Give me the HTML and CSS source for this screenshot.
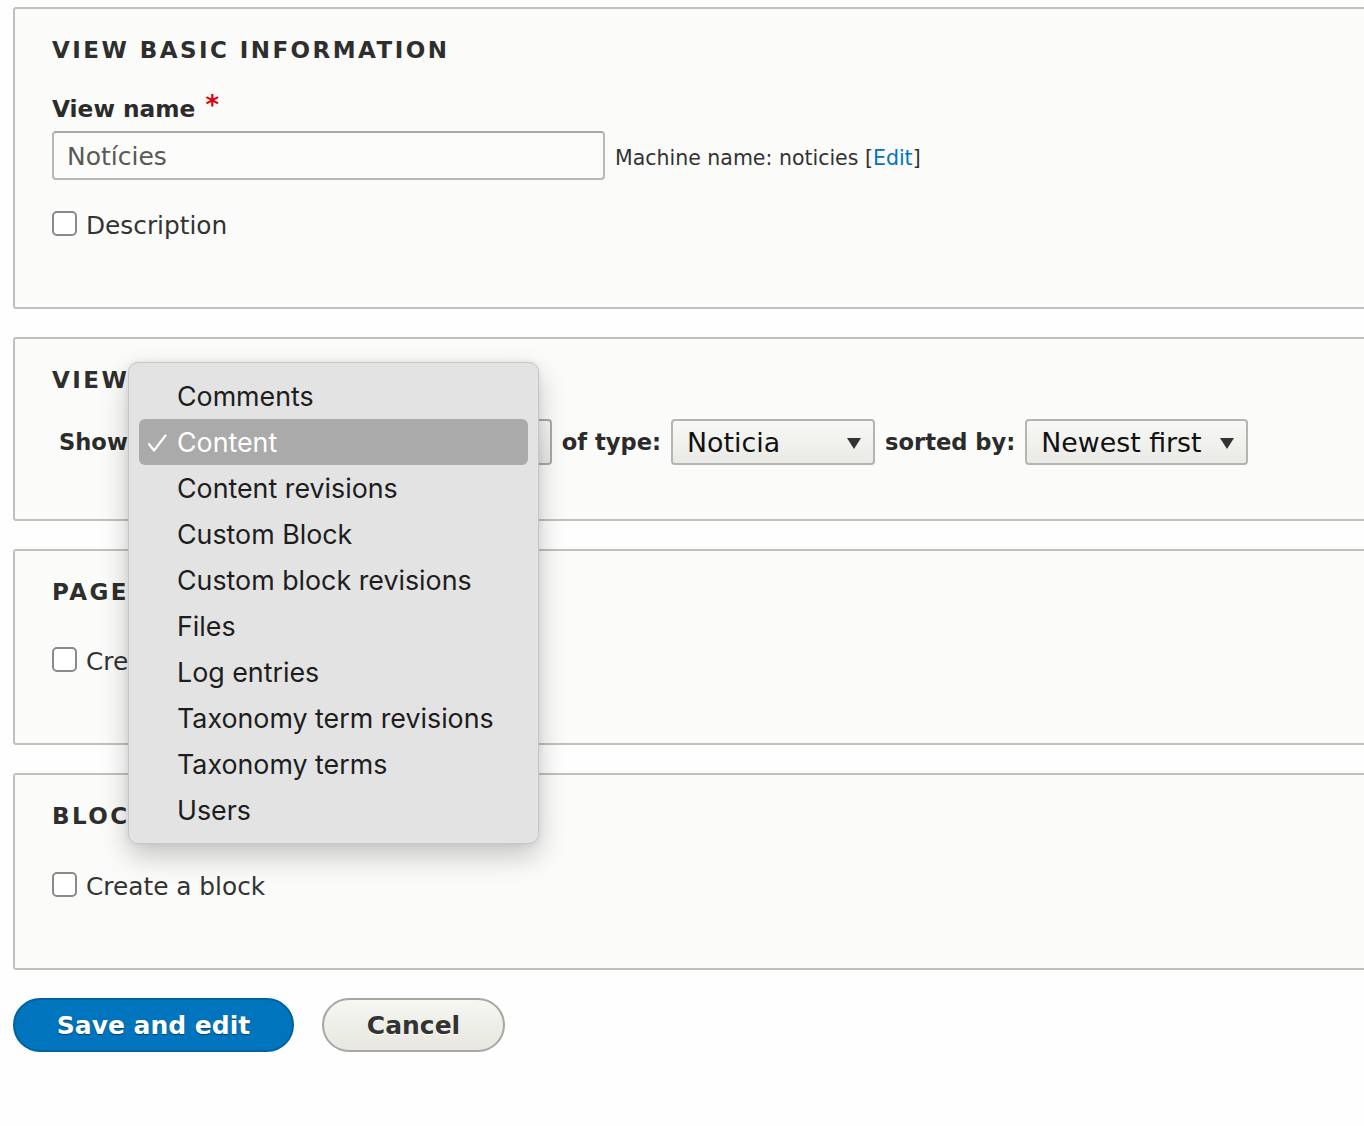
FILE: index.html
```html
<!DOCTYPE html>
<html lang="en">
<head>
<meta charset="utf-8">
<title>Add view</title>
<link rel="stylesheet" href="styles.css">
</head>
<body>
<div class="page">
  <div class="fieldset fs-basic">
    <div class="legend">View basic information</div>
    <div class="label">View name <span class="req">*</span></div>
    <div class="name-row">
      <div class="text-input">Notícies</div>
      <div class="machine">Machine name: noticies [<a href="#" class="link">Edit</a>]</div>
    </div>
    <div class="check-row"><span class="checkbox"></span><span>Description</span></div>
  </div>

  <div class="fieldset fs-settings">
    <div class="legend">View settings</div>
    <div class="show-row">
      <span class="blabel">Show:</span>
      <div class="select sel-show"><span>Content</span><svg class="arrow" width="14" height="11" viewBox="0 0 14 11"><path d="M0 0H14L7 11Z" fill="#333"/></svg></div>
      <span class="blabel">of type:</span>
      <div class="select sel-type"><span>Noticia</span><svg class="arrow" width="14" height="11" viewBox="0 0 14 11"><path d="M0 0H14L7 11Z" fill="#333"/></svg></div>
      <span class="blabel">sorted by:</span>
      <div class="select sel-sort"><span>Newest first</span><svg class="arrow" width="14" height="11" viewBox="0 0 14 11"><path d="M0 0H14L7 11Z" fill="#333"/></svg></div>
    </div>
  </div>

  <div class="fieldset fs-page">
    <div class="legend">Page settings</div>
    <div class="check-row first"><span class="checkbox"></span><span>Create a page</span></div>
  </div>

  <div class="fieldset fs-block">
    <div class="legend">Block settings</div>
    <div class="check-row first"><span class="checkbox"></span><span>Create a block</span></div>
  </div>

  <div class="actions">
    <button class="btn btn-primary">Save and edit</button>
    <button class="btn btn-default">Cancel</button>
  </div>

  <div class="menu">
    <div class="item">Comments</div>
    <div class="item selected"><svg class="check" width="20" height="18" viewBox="0 0 20 18"><path d="M2 10L7 16.5L18.5 1.5" fill="none" stroke="#fff" stroke-width="2.2" stroke-linecap="round" stroke-linejoin="round"/></svg>Content</div>
    <div class="item">Content revisions</div>
    <div class="item">Custom Block</div>
    <div class="item">Custom block revisions</div>
    <div class="item">Files</div>
    <div class="item">Log entries</div>
    <div class="item">Taxonomy term revisions</div>
    <div class="item">Taxonomy terms</div>
    <div class="item">Users</div>
  </div>
</div>
</body>
</html>
```
FILE: styles.css
```css
html, body {
  margin: 0;
  padding: 0;
  background: #fefefe;
  overflow: hidden;
}
body {
  font-family: "DejaVu Sans", "Liberation Sans", sans-serif;
  color: #333;
  font-size: 25px;
}
.page {
  position: relative;
  padding: 7px 0 0 13px;
  width: 1440px;
}
.fieldset {
  box-sizing: border-box;
  width: 1420px;
  border: 2px solid #c0c0bd;
  border-radius: 3px;
  background: #fbfbfa;
  padding: 26px 37px 67px 37px;
  margin-bottom: 28px;
}
.legend {
  font-weight: bold;
  font-size: 23px;
  letter-spacing: 2.45px;
  text-transform: uppercase;
  line-height: 30px;
  height: 30px;
  color: #2e2e2e;
}
.label {
  margin-top: 28px;
  font-weight: bold;
  font-size: 23.3px;
  line-height: 30px;
  color: #2b2b2b;
}
.req {
  color: #e1000f;
  font-size: 26px;
  position: relative;
  top: -3px;
  margin-left: 2px;
}
.name-row {
  margin-top: 7px;
  display: flex;
  align-items: center;
  gap: 10px;
}
.text-input {
  box-sizing: border-box;
  width: 553px;
  height: 49px;
  border: 2px solid #b8b8b8;
  border-top-color: #a8a8a8;
  border-radius: 4px;
  background: #fcfcfa;
  padding: 0 13px;
  line-height: 47px;
  font-size: 25px;
  color: #595959;
}
.machine {
  font-size: 20.5px;
  color: #333;
  padding-top: 4px;
}
.link {
  color: #0074bd;
  text-decoration: none;
}
.check-row {
  margin-top: 30px;
  display: flex;
  align-items: center;
  gap: 9px;
  height: 30px;
  font-size: 24.8px;
  color: #333;
}
.check-row.first {
  margin-top: 40px;
}
.fs-page .check-row.first { margin-top: 39px; }
.checkbox {
  box-sizing: border-box;
  width: 25px;
  height: 25px;
  border: 2px solid #8a8a8a;
  border-radius: 5px;
  background: #fff;
  margin-top: -4px;
  flex: none;
}
.fs-settings {
  padding-bottom: 54px;
}
.show-row {
  margin-top: 24px;
  padding-left: 7px;
  display: flex;
  align-items: center;
  gap: 10px;
  height: 46px;
}
.blabel {
  font-weight: bold;
  font-size: 22.6px;
  color: #2b2b2b;
}
.select {
  box-sizing: border-box;
  height: 46px;
  border: 2px solid #b4b4b0;
  border-radius: 4px;
  background: linear-gradient(#f8f8f6, #e9e9e5);
  display: flex;
  align-items: center;
  justify-content: space-between;
  padding: 0 12px 0 14px;
  font-size: 26.8px;
  color: #111;
}
.sel-show { width: 405px; border-color: #a9a9a9; }
.sel-type { width: 204px; }
.sel-sort { width: 223px; }
.arrow { flex: none; margin-top: 2px; }
.actions {
  display: flex;
  gap: 28px;
}
.btn {
  box-sizing: border-box;
  height: 54px;
  border-radius: 27px;
  font-family: "DejaVu Sans", sans-serif;
  font-weight: bold;
  font-size: 25px;
  padding: 0;
  cursor: pointer;
}
.btn-primary {
  width: 281px;
  background: #0074bd;
  border: 2px solid #0062a0;
  color: #fff;
  text-shadow: 0 1px 1px rgba(0,0,0,0.45);
}
.btn-default {
  width: 183px;
  background: linear-gradient(#f6f6f3, #e7e7df);
  border: 2px solid #a6a6a6;
  color: #333;
  text-shadow: 0 1px 0 #fff;
}
.menu {
  position: absolute;
  left: 128px;
  top: 362px;
  width: 411px;
  box-sizing: border-box;
  padding: 10px 10px;
  background: #e3e3e3;
  border: 1px solid #c6c6c6;
  border-radius: 10px;
  box-shadow: 0 12px 28px rgba(0,0,0,0.22), 0 0 6px rgba(0,0,0,0.08);
  font-family: Inter, "Noto Sans", sans-serif;
  font-size: 26.8px;
  color: #1d1d1d;
}
.item {
  position: relative;
  height: 46px;
  line-height: 46px;
  padding-left: 38px;
  border-radius: 6px;
}
.item.selected {
  background: #aaaaaa;
  color: #fff;
}
.check {
  position: absolute;
  left: 8px;
  top: 15px;
}
```
